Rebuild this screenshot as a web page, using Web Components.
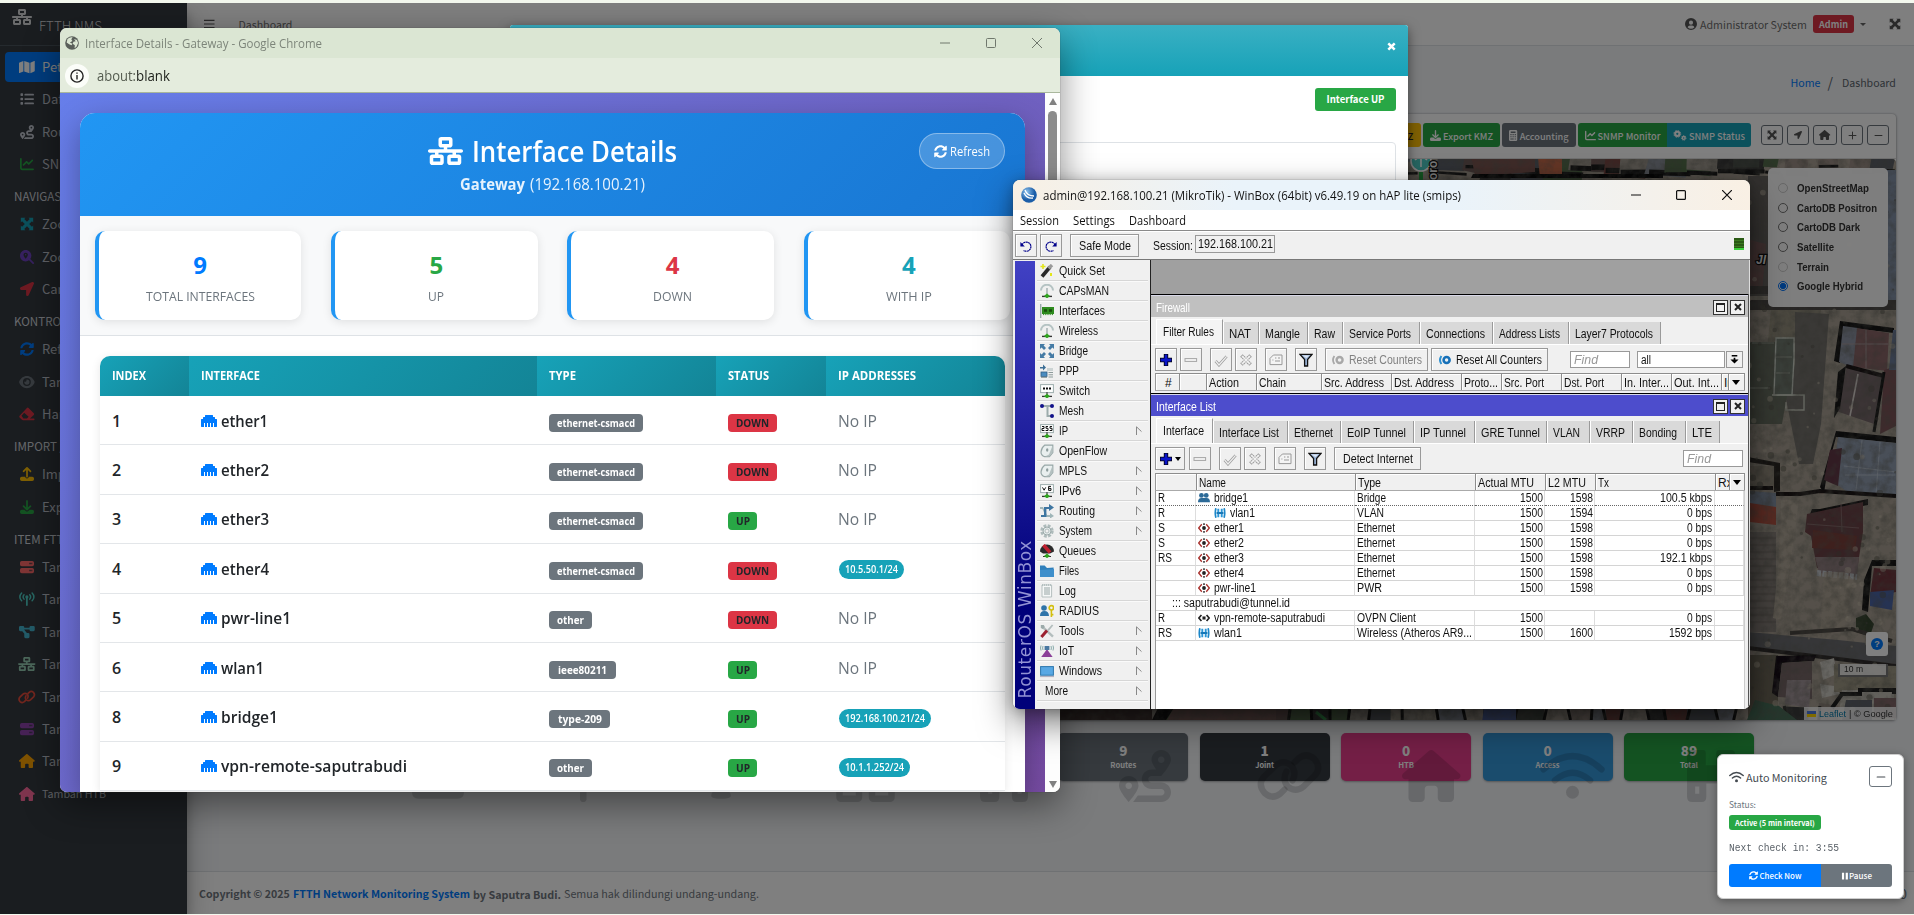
<!DOCTYPE html>
<html lang="id">
<head>
<meta charset="utf-8">
<title>FTTH NMS</title>
<style>
html,body{margin:0;padding:0;width:1914px;height:915px;overflow:hidden;background:#f3f8ee}
</style>
</head>
<body>
<desk-top></desk-top>
<script>
const SS='"Noto Sans CJK SC","Open Sans",sans-serif';
const SEG='"Open Sans","Noto Sans",sans-serif';
const define=(tag,css,render)=>customElements.define(tag,class extends HTMLElement{
  connectedCallback(){
    if(this.shadowRoot)return;
    this.attachShadow({mode:'open'}).innerHTML='<style>*{box-sizing:border-box}'+css+'</style>'+render(this);
  }
});

/* text run set to a fixed advance width */
customElements.define('fit-text',class extends HTMLElement{
  connectedCallback(){
    if(this.shadowRoot)return;
    this.attachShadow({mode:'open'}).innerHTML='<style>:host{display:inline-block;white-space:nowrap;flex:none;text-align:left}span{display:inline-block;transform-origin:0 50%}</style><span><slot></slot></span>';
    const w=+this.getAttribute('w'),s=this.shadowRoot.querySelector('span');
    if(!w||!this.textContent.length)return;
    const nat=s.getBoundingClientRect().width;
    if(!nat)return;
    const cs=getComputedStyle(this);
    if(cs.fontFamily.includes('CJK'))s.style.fontSize=(parseFloat(cs.fontSize)*w/nat).toFixed(3)+'px';
    else s.style.transform=`scaleX(${(w/nat).toFixed(4)})`;
    this.style.width=w+'px';
  }
});
const T=(t,w)=>`<fit-text w="${w}">${t}</fit-text>`;

/* ---------- icons ---------- */
const I={
net:[640,512,'<path d="M256 64H384v64H256V64zM240 0c-26.5 0-48 21.5-48 48v96c0 26.5 21.5 48 48 48h48v32H32c-17.7 0-32 14.3-32 32s14.3 32 32 32h96v32H80c-26.5 0-48 21.5-48 48v96c0 26.5 21.5 48 48 48H240c26.5 0 48-21.5 48-48V368c0-26.5-21.5-48-48-48H192V288H448v32H400c-26.5 0-48 21.5-48 48v96c0 26.5 21.5 48 48 48H560c26.5 0 48-21.5 48-48V368c0-26.5-21.5-48-48-48H512V288h96c17.7 0 32-14.3 32-32s-14.3-32-32-32H352V192h48c26.5 0 48-21.5 48-48V48c0-26.5-21.5-48-48-48H240zM96 448V384H224v64H96zm320-64H544v64H416V384z"/>'],
sync:[512,512,'<path d="M370.72 133.28C339.458 104.008 298.888 87.962 255.848 88c-77.458.068-144.328 53.178-162.791 126.85-1.344 5.363-6.122 9.15-11.651 9.15H24.103c-7.498 0-13.194-6.807-11.807-14.176C33.933 94.924 134.813 8 256 8c66.448 0 126.791 26.136 171.315 68.685L463.03 40.97C478.149 25.851 504 36.559 504 57.941V192c0 13.255-10.745 24-24 24H345.941c-21.382 0-32.09-25.851-16.971-40.971l41.75-41.749zM32 296h134.059c21.382 0 32.09 25.851 16.971 40.971l-41.75 41.75c31.262 29.273 71.835 45.319 114.876 45.28 77.418-.07 144.315-53.144 162.787-126.849 1.344-5.363 6.122-9.15 11.651-9.15h57.304c7.498 0 13.194 6.807 11.807 14.176C478.067 417.076 377.187 504 256 504c-66.448 0-126.791-26.136-171.315-68.685L48.97 471.03C33.851 486.149 8 475.441 8 454.059V320c0-13.255 10.745-24 24-24z"/>'],
home:[576,512,'<path d="M575.8 255.5c0 18-15 32.1-32 32.1h-32l.7 160.2c0 2.7-.2 5.4-.5 8.1V472c0 22.1-17.9 40-40 40H392c-22.1 0-40-17.9-40-40V384c0-17.7-14.3-32-32-32H256c-17.7 0-32 14.3-32 32v88c0 22.1-17.9 40-40 40H104c-22.1 0-40-17.9-40-40V287.6H32c-18 0-32-14-32-32.1c0-9 3-17 10-24L266.4 8c7-7 15-8 22-8s15 2 21 7L564.8 231.5c8 7 12 15 11 24z"/>'],
map:[576,512,'<path d="M0 117.66v346.32c0 11.32 11.43 19.06 21.94 14.86L160 416V32L20.12 87.95A32.006 32.006 0 0 0 0 117.66zM192 416l192 64V96L192 32v384zM554.06 33.16L416 96v384l139.88-55.95A31.996 31.996 0 0 0 576 394.34V48.02c0-11.32-11.43-19.06-21.94-14.86z"/>'],
list:[512,512,'<path d="M40 48h48q24 0 24 24v48q0 24-24 24H40q-24 0-24-24V72q0-24 24-24zM192 64H480q32 0 32 32t-32 32H192q-32 0-32-32t32-32zm0 160H480q32 0 32 32t-32 32H192q-32 0-32-32t32-32zm0 160H480q32 0 32 32t-32 32H192q-32 0-32-32t32-32zM40 208h48q24 0 24 24v48q0 24-24 24H40q-24 0-24-24v-48q0-24 24-24zm0 160h48q24 0 24 24v48q0 24-24 24H40q-24 0-24-24v-48q0-24 24-24z"/>'],
route:[512,512,'<path d="M416 320h-96c-17.6 0-32-14.4-32-32s14.4-32 32-32h96s96-107 96-160-43-96-96-96-96 43-96 96c0 25.5 22.2 63.4 45.3 96H320c-52.9 0-96 43.1-96 96s43.1 96 96 96h96c17.6 0 32 14.4 32 32s-14.4 32-32 32H185.5c-16 24.8-33.8 47.7-47.3 64H416c52.9 0 96-43.1 96-96s-43.1-96-96-96zm0-256c17.7 0 32 14.3 32 32s-14.3 32-32 32-32-14.3-32-32 14.3-32 32-32zM96 256c-53 0-96 43-96 96s96 160 96 160 96-107 96-160-43-96-96-96zm0 128c-17.7 0-32-14.3-32-32s14.3-32 32-32 32 14.3 32 32-14.3 32-32 32z"/>'],
chart:[512,512,'<path d="M64 64c0-17.7-14.3-32-32-32S0 46.3 0 64V400c0 44.2 35.8 80 80 80H480c17.7 0 32-14.3 32-32s-14.3-32-32-32H80c-8.8 0-16-7.2-16-16V64zm406.6 86.6c12.5-12.5 12.5-32.8 0-45.3s-32.8-12.5-45.3 0L320 210.7l-57.4-57.4c-12.5-12.5-32.8-12.5-45.3 0l-112 112c-12.5 12.5-12.5 32.8 0 45.3s32.8 12.5 45.3 0L240 221.3l57.4 57.4c12.5 12.5 32.8 12.5 45.3 0l128-128z"/>'],
expand:[512,512,'<path d="M30 30H200L155 75 256 176 357 75 312 30H482V200L437 155 336 256 437 357 482 312V482H312L357 437 256 336 155 437 200 482H30V312L75 357 176 256 75 155 30 200z"/>'],
search:[512,512,'<path fill-rule="evenodd" d="M416 208c0 46-15 88-40 122L503 457q20 22 0 45t-45 0L330 376c-34 25-76 40-122 40C93 416 0 323 0 208S93 0 208 0s208 93 208 208zM208 96c-44 0-80 32-80 76 0 50 80 148 80 148s80-98 80-148c0-44-36-76-80-76zm0 50a28 28 0 1 1 0 56 28 28 0 0 1 0-56z"/>'],
arrow:[512,512,'<path d="M444.52 3.52L28.74 195.42c-47.97 22.39-31.98 92.75 19.19 92.75h175.91v175.91c0 51.17 70.36 67.17 92.75 19.19l191.9-415.78c15.99-38.39-25.59-79.97-63.97-63.97z"/>'],
eye:[576,512,'<path fill-rule="evenodd" d="M288 32C160 32 50 120 8 240q-6 16 0 32C50 392 160 480 288 480s238-88 280-208q6-16 0-32C526 120 416 32 288 32zm0 80a144 144 0 1 1 0 288 144 144 0 0 1 0-288zm0 48a96 96 0 0 1 0 192 96 96 0 0 1-94-116q20 14 44 10t32-24 0-44q8-18 18-18z"/>'],
eraser:[576,512,'<path fill-rule="evenodd" d="M290 32q32-22 60 4L540 226q26 32 0 62L400 416H544q26 6 26 32t-26 32H144q-20 0-36-14L22 380q-24-30 0-60zM190 210L92 316l70 100h130l60-60z"/>'],
upload:[512,512,'<path d="M288 109V352q-6 32-32 32t-32-32V109l-73 74q-24 14-45-6-14-22 0-40L233 9q24-18 46 0L407 137q16 26-2 44-22 14-44 0zM64 352H192q0 64 64 64t64-64H448q64 0 64 64v32q0 64-64 64H64Q0 512 0 448V416q0-64 64-64z"/>'],
download:[512,512,'<path d="M288 32V275l73-74q24-14 45 6 14 22 0 40L279 375q-24 18-46 0L105 247q-16-26 2-44 22-14 44 0l73 72V32q6-32 32-32t32 32zM64 352H164l46 46q46 38 92 0l46-46H448q64 0 64 64v32q0 64-64 64H64Q0 512 0 448V416q0-64 64-64z"/>'],
server:[512,512,'<path fill-rule="evenodd" d="M64 32H448q64 0 64 64v64q0 64-64 64H64Q0 224 0 160V96Q0 32 64 32zM344 104v48h48v-48zm72 0v48h32v-48zM64 288H448q64 0 64 64v64q0 64-64 64H64Q0 480 0 416V352q0-64 64-64zm280 72v48h48v-48zm72 0v48h32v-48z"/>'],
tower:[576,512,'<g fill="none" stroke="currentColor" stroke-width="54" stroke-linecap="round"><path d="M96 40Q-34 180 96 320M184 100Q116 180 184 260M480 40Q610 180 480 320M392 100Q460 180 392 260"/></g><circle cx="288" cy="180" r="58"/><path d="M256 180h64V484q-6 28-32 28t-32-28z"/>'],
diagram:[576,512,'<path d="M48 32h96q48 0 48 48v16H384V80q0-48 48-48h96q48 0 48 48v96q0 48-48 48H432q-48 0-48-48V160H192v12l96 116h48q48 0 48 48v96q0 48-48 48H240q-48 0-48-48V336q0-12 4-20L120 224H48Q0 224 0 176V80Q0 32 48 32z"/>'],
link:[640,512,'<g fill="none" stroke="currentColor" stroke-width="62" stroke-linecap="round"><path d="M270 390L232 428Q150 492 76 424 2 340 70 262L184 150Q260 90 336 150 394 220 350 300"/><path d="M370 122L408 84Q490 20 564 88 638 172 570 250L456 362Q380 422 304 362 246 292 290 212"/></g>'],
eth:[512,512,'<path d="M496 192h-48v-48c0-8.8-7.2-16-16-16h-48V80c0-8.8-7.2-16-16-16H144c-8.8 0-16 7.2-16 16v48H80c-8.8 0-16 7.2-16 16v48H16c-8.8 0-16 7.2-16 16v224c0 8.8 7.2 16 16 16h80V320h32v128h64V320h32v128h64V320h32v128h64V320h32v128h80c8.8 0 16-7.2 16-16V208c0-8.8-7.2-16-16-16z"/>'],
user:[512,512,'<path fill-rule="evenodd" d="M256 0a256 256 0 1 1 0 512 256 256 0 0 1 0-512zm0 110a88 88 0 1 0 0 176 88 88 0 0 0 0-176zM110 390q60 70 146 70t146-70q-26-66-100-66h-92q-74 0-100 66z"/>'],
calc:[384,512,'<path fill-rule="evenodd" d="M64 0H320q64 0 64 64V448q0 64-64 64H64Q0 512 0 448V64Q0 0 64 0zM80 64v72H304V64zM64 190v50h56v-50zm100 0v50h56v-50zm100 0v50h56v-50zM64 290v50h56v-50zm100 0v50h56v-50zm100 0v50h56v-50zM64 390v50h156v-50zm200 0v50h56v-50z"/>'],
cogs:[640,512,'<g fill="none" stroke="currentColor"><circle cx="200" cy="180" r="100" stroke-width="96"/><circle cx="200" cy="180" r="160" stroke-width="40" stroke-dasharray="76 49.6"/><circle cx="500" cy="370" r="66" stroke-width="66"/><circle cx="500" cy="370" r="108" stroke-width="36" stroke-dasharray="52 33"/></g>'],
wifi:[640,512,'<g fill="none" stroke="currentColor" stroke-width="62" stroke-linecap="round"><path d="M34 190Q320-70 606 190M146 300Q320 150 494 300"/></g><circle cx="320" cy="416" r="64"/>'],
building:[512,512,'<path fill-rule="evenodd" d="M60 0H180q24 0 24 24V150H308V24q0-24 24-24H452q40 0 40 40V460q0 52-50 52H380q-46 0-46-52V330H210V460q0 52-46 52H70q-50 0-50-52V40Q20 0 60 0zM100 360v70h40v-70zM390 360v70h40v-70z"/>'],
splitter:[512,512,'<path d="M60 0h392v200L320 330v70q40 20 30 60-20 20-94 20t-94-20q-10-40 30-60v-70L60 200z"/>'],
plus:[512,512,'<path d="M256 60V452M60 256H452" stroke="currentColor" stroke-width="56" stroke-linecap="round"/>'],
minus:[512,512,'<path d="M60 256H452" stroke="currentColor" stroke-width="60" stroke-linecap="round"/>'],
pause:[512,512,'<path d="M60 40H200V472H60zM300 40H440V472H300z"/>'],
bars:[448,512,'<path d="M0 72H448V124H0zM0 230H448V282H0zM0 388H448V440H0z"/>'],
globe:[512,512,'<circle cx="256" cy="256" r="250"/><path fill="#dbe6d3" d="M90 110q90-80 190-60l-50 70 40 60-90 60 90 40-30 60-90-40-90-60zM330 110l110 40 40 110-60 130-70 60 10-110-80-60 30-70 80-20z"/>']
};
define('fa-icon',':host{display:inline-block;flex:none;line-height:0}svg{display:block;fill:currentColor}',h=>{
  const [w,t,p]=I[h.getAttribute('n')],s=+h.getAttribute('s');
  return `<svg width="${(s*w/t).toFixed(2)}" height="${s}" viewBox="0 0 ${w} ${t}">${p}</svg>`;
});
const IC=(n,s,c)=>`<fa-icon n="${n}" s="${s}"${c?` style="color:${c}"`:''}></fa-icon>`;

/* 14px pictograms of the router tool */
const dome='<path d="M1 6.5A6 5.8 0 0 1 13 6.5" fill="none" stroke="#b5c3c3" stroke-width="2"/><path d="M7 4v6" stroke="#a9b5b5" stroke-width="1.6"/><path d="M2 12.4h10" stroke="#333" stroke-width="1.4"/><path d="M7 9.5l3 2.6L7 14.4 4 12z" fill="#2fa51e"/>';
const box=(t)=>`<rect x=".6" y=".6" width="12.8" height="8" fill="#fff" stroke="#9dadad"/>${t}<path d="M7 8v3" stroke="#555" stroke-width="1.4"/><path d="M2 12.4h10" stroke="#333" stroke-width="1.3"/><path d="M7 9.8l3 2.4-3 2.2-3-2.2z" fill="#2fa51e"/>`;
const disc='<path d="M4.6 1.2h8.2v7.4L9.4 12.7H4.6Q1 11.6 1 8 1.4 3.5 4.6 1.2z" fill="#e9efef" stroke="#97a7a7" stroke-width="1.2"/><path d="M12.6 1.4v7L9.4 12.5H5L9 10.6z" fill="#b4c0c0"/><ellipse cx="7.2" cy="6" rx="1.2" ry="1.7" fill="#8c9c9c"/>';
const W={
wand:'<path d="M2 12.5L10 3" stroke="#2b2b2b" stroke-width="3.6"/><path d="M8.6 4.4L12 1" stroke="#9a9a9a" stroke-width="3.4"/><path d="M3 0v5M.5 2.5h5" stroke="#e3e61a" stroke-width="1.6"/><path d="M11 9v3" stroke="#e3e61a" stroke-width="2"/>',
dome,
card:'<path d="M.7 0v14" stroke="#9aa" stroke-width="1.4"/><rect x="2" y="3" width="12" height="7" fill="#2e8b1e"/><path d="M4 5.2h3v2.6H4zM9 5.2h3v2.6H9z" fill="#174d0c"/><path d="M3 10.6h10" stroke="#2e8b1e" stroke-dasharray="1.2 1"/>',
bridge:'<g fill="#457ba5"><path d="M0 0h5L3.6 1.6 6 4 4 6 1.6 3.6 0 5zM14 0H9l1.4 1.6L8 4l2 2 2.4-2.4L14 5zM0 14h5l-1.4-1.6L6 10 4 8l-2.4 2.4L0 9zM14 14H9l1.4-1.6L8 10l2-2 2.4 2.4L14 9z"/></g>',
ppp:'<path d="M0 3h3V.5L6 3.6 3 6.5V4.4H0z" fill="#3d6f96"/><rect x="7" y="4" width="6" height="3" fill="#ccd4d4"/><rect x="1" y="8" width="6" height="4.4" fill="#4b8cc0" stroke="#315f85" stroke-width=".8"/><path d="M8.5 8.5H13M8.5 10.8H13M8.5 13H13M1 13.4h6" stroke="#8d9b9b"/>',
sw:box('<path d="M3 4.4h8" stroke="#111" stroke-width="2" stroke-dasharray="2 1"/>'),
mesh:'<path d="M2 2h10M7.5 2v10H12" fill="none" stroke="#9cabab" stroke-width="2"/><g fill="#12128a"><circle cx="2" cy="2" r="2"/><circle cx="12" cy="2" r="2"/><circle cx="12" cy="12" r="2"/></g>',
ip:box('<path d="M2 2.5h2v2H2v2h2.4M8 2.5H6v1.8h2v2.2H5.6M12 2.5h-2v1.8h2v2.2H9.6" fill="none" stroke="#111"/>'),
disc,
v6:box('<path d="M2.5 3.4l1.6 2.8 1.6-2.8M11 2.4H8.6v4H11v-2H8.6" fill="none" stroke="#111"/>'),
route:'<path d="M0 3h3l4 8h3V9l4 3-4 2.5V13H6L2.4 5H0z" fill="#9fb5b8"/><path d="M1 13V11h3V3h5V0l5 3.6L9 7V5H6.4v8z" fill="#3f76a1"/>',
gear:'<circle cx="7" cy="7" r="5.2" fill="none" stroke="#aebbbb" stroke-width="3" stroke-dasharray="2.7 1.4"/><circle cx="7" cy="7" r="4" fill="#e6ecec" stroke="#9caaaa"/><circle cx="7" cy="7" r="2" fill="#f0f0f0" stroke="#9caaaa" stroke-width=".7"/>',
queue:'<path d="M0 7.5A7 7 0 0 1 14 7.5L10 9.5H3z" fill="#2b2b2b"/><path d="M3.5 1L10 8.4" stroke="#c02030" stroke-width="3.6"/><path d="M3 12.5h8" stroke="#333" stroke-width="1.2"/><path d="M7 9.6l3 2.4-3 2.2-3-2.2z" fill="#2fa51e"/>',
files:'<path d="M0 1.5h4.6L7 4l6.6-.4V13H0z" fill="#2f7fbb"/><path d="M0 6l14-1v8H0z" fill="#3f8fcb"/>',
log:'<path d="M2 1h9.6v12H2z" fill="#f6f8f8" stroke="#b5bfbf"/><path d="M4 4h6M4 6h6M4 8h6M4 10h6" stroke="#96a4a4"/><path d="M2 1h10" stroke="#9aa" stroke-dasharray="1 1"/>',
radius:'<circle cx="4" cy="4" r="2.8" fill="#2f74a9"/><path d="M0 12q0-5 4.4-5T9 12z" fill="#2f74a9"/><circle cx="11.4" cy="3.8" r="2.2" fill="none" stroke="#d3bf10" stroke-width="1.7"/><path d="M11.4 6v7M11.4 10.6h2" stroke="#d3bf10" stroke-width="1.6"/>',
tools:'<path d="M2 2.4L13 12.6" stroke="#b3bdbd" stroke-width="2.4"/><path d="M.8 1v3l2 1 2-2-1-2z" fill="#9caaaa"/><path d="M12.6 1L8 6.4" stroke="#b3bdbd" stroke-width="1.8"/><path d="M7 6.6L1.4 13" stroke="#9c2130" stroke-width="3"/>',
iot:'<path d="M1 1.5Q0 4 1 6.5M13 1.5Q14 4 13 6.5M3 2Q2.2 4 3 6M11 2Q11.8 4 11 6" fill="none" stroke="#8aa" /><rect x="4.6" y="2" width="4.8" height="4" fill="#4a78a0"/><path d="M6.4 6h1.2l5 7H1.2z" fill="#8b3f98"/>',
win:'<rect x=".6" y="2.6" width="12.8" height="8.6" fill="#58a8e4" stroke="#2c77ae"/><path d="M0 12.6h14" stroke="#aab" stroke-width="1"/>',
br:'<g fill="#2c6a97"><circle cx="4" cy="4" r="2.8"/><circle cx="9.6" cy="4" r="2.8"/><path d="M0 12q0-5 4-5h6q4 0 4 5z"/></g>',
wl:'<g fill="none" stroke="#1b86c8"><path d="M2.2 1.5Q.8 7 2.2 12.5M11.8 1.5Q13.2 7 11.8 12.5" stroke-width="2"/><path d="M5 2v10M9 2v10" stroke="#2a95d6" stroke-width="2.2"/><path d="M3 7h8" stroke="#1778b8" stroke-width="2.4"/></g>',
port:'<path d="M4.4 2.6L.8 7l3.6 4.4M9.6 2.6L13.2 7 9.6 11.4" fill="none" stroke="#a8302c" stroke-width="1.5"/><circle cx="7" cy="7" r="2.2" fill="#222"/><path d="M7 1.4v2M7 10.6v2" stroke="#444" stroke-width="2"/>',
vpn:'<path d="M4 3.4L1 7l3 3.6M10 3.4L13 7l-3 3.6" fill="none" stroke="#222" stroke-width="1.9"/><rect x="5.2" y="5.2" width="3.6" height="3.6" fill="#222"/>',
add:'<path d="M7 1v12M1 7h12" stroke="#000" stroke-width="4.4"/><path d="M7 1.6v10.8M1.6 7h10.8" stroke="#0a14c8" stroke-width="2.8"/>',
rem:'<rect x="1" y="5.6" width="11.6" height="2.8" fill="#f6f6f6" stroke="#a5a5a5"/>',
ok:'<path d="M1.6 8l3.4 4L12.6 3.4" fill="none" stroke="#9e9e9e" stroke-width="2.8"/><path d="M1.6 8l3.4 4L12.6 3.4" fill="none" stroke="#f0f0f0" stroke-width="1.2"/>',
no:'<path d="M2.4 2.4l9.2 9.2M11.6 2.4l-9.2 9.2" stroke="#9e9e9e" stroke-width="3.6" stroke-dasharray="1.8 .5"/><path d="M3 3l8 8M11 3l-8 8" stroke="#f2f2f2" stroke-width="1.6"/>',
note:'<path d="M1 5.4L4.4 2H13v9.6H1z" fill="#f4f4f4" stroke="#999"/><path d="M3.4 7h1M6 5h1.4M9 5h2M6 8h5" stroke="#999"/>',
filter:'<path d="M1 1.4h12L8.6 6.6V13H5.6V6.6z" fill="#9ab4d8" stroke="#111" stroke-width="1.3"/><path d="M3.4 2.4h7L7.4 5z" fill="#dfe8f4"/>',
undo:'<path d="M3 6a4.6 4.6 0 1 1 1.6 5.4" fill="none" stroke="#00008b" stroke-width="1.2" stroke-dasharray="2 .4"/><path d="M1.4 3v4.4h4.4z" fill="#00008b"/>',
redo:'<path d="M11 6a4.6 4.6 0 1 0-1.6 5.4" fill="none" stroke="#00008b" stroke-width="1.2" stroke-dasharray="2 .4"/><path d="M12.6 3v4.4H8.2z" fill="#00008b"/>',
rst:'<path d="M3.4 3Q.6 7 3.4 11" fill="none" stroke="#2d8fd0" stroke-width="2"/><circle cx="8.6" cy="7" r="3" fill="none" stroke="#1670b8" stroke-width="2.6"/>',
rstd:'<path d="M3.4 3Q.6 7 3.4 11" fill="none" stroke="#a8a8a8" stroke-width="1.8"/><circle cx="8.6" cy="7" r="3" fill="none" stroke="#a8a8a8" stroke-width="2.4"/>',
dd:'<path d="M4 3h6M7 5v3" stroke="#000" stroke-width="1.8"/><path d="M2.6 7h8.8L7 11.4z" fill="#000"/>'
};
define('win-icon',':host{display:inline-block;flex:none;line-height:0}svg{display:block}',h=>`<svg width="${h.getAttribute('s')||14}" height="${h.getAttribute('s')||14}" viewBox="0 0 14 14">${W[h.getAttribute('n')]}</svg>`);
const WI=(n,s)=>`<win-icon n="${n}" s="${s||14}"></win-icon>`;

/* ---------- sidebar ---------- */
define('side-bar',`:host{display:block;width:187px;height:911px;background:#343a40;font-family:${SS};color:#c2c7d0;flex:none;box-shadow:0 14px 28px rgba(0,0,0,.25),0 10px 10px rgba(0,0,0,.22);z-index:2;position:relative}
.brand{height:43px;border-bottom:1px solid #4b545c;display:flex;padding:6px 0 0 12px;gap:7px;font-size:18px;line-height:28px;color:#d4d6d8;font-weight:300}
nav{padding:6px 5px}
.i{height:30px;margin-bottom:2.35px;border-radius:4px;display:grid;grid-template-columns:44px 1fr;align-items:center;font-size:13px;line-height:20px;padding-right:5px;white-space:nowrap;overflow:hidden}
.i fa-icon{justify-self:center}.i b{font-weight:400;margin-left:-7px}
.on{background:#007bff;color:#fff}
.h{height:28px;padding:6px 0 0 9px;font-size:11.6px;line-height:18px;color:#d0d4db;font-weight:400;white-space:nowrap;overflow:hidden}`,()=>{
const it=(n,c,t,x='')=>`<div class="i ${x}">${IC(n,14,c)}<b>${t}</b></div>`,hd=t=>`<div class="h">${t}</div>`;
return `<div class="brand">${IC('net',16)}${T('FTTH NMS',63)}</div><nav>`+
it('map','#fff','Peta','on')+it('list','#c2c7d0','Daftar')+it('route','#c2c7d0','Routes')+it('chart','#28a745','SNMP')+
hd('NAVIGASI')+it('expand','#17a2b8','Zoom')+it('search','#6f42c1','Zoom')+it('arrow','#dc3545','Cari')+
hd('KONTROL')+it('sync','#007bff','Refresh')+it('eye','#6c757d','Tampil')+it('eraser','#dc3545','Hapus')+
hd('IMPORT / EXPORT')+it('upload','#ffc107','Import')+it('download','#28a745','Export')+
hd('ITEM FTTH')+it('server','#ff6b6b','Tambah')+it('tower','#4ecdc4','Tambah')+it('diagram','#45b7d1','Tambah')+it('net','#96ceb4','Tambah')+it('link','#e74c3c','Tambah')+it('server','#8e44ad','Tambah')+it('home','#ffa500','Tambah')+it('home','#ff6b9d',T('Tambah HTB',64))+'</nav>';
});

/* ---------- satellite map ---------- */
define('sat-map',':host{display:block;position:relative;height:561px;overflow:hidden;border-radius:4px 4px 0 0}svg{display:block}.o{position:absolute}',()=>{
let s=7;const r=()=>(s=(s*16807)%2147483647)/2147483647;
let p='';
const cols=['#6f5a58','#8a8f98','#a19a90','#4a5048','#b0a79b','#7a4a44','#5b6068','#3a3a3a','#9c8f86','#56704e'];
for(let x=1055;x<1900;x+=14+r()*22){const w=14+r()*34,c=cols[r()*10|0];p+=`<path d="M${x} ${150+r()*8}l${w} ${r()*5}l${-r()*6} ${12+r()*14}l${-w} ${-r()*4}z" fill="${c}"/><path d="M${x} ${166+r()*8}l${w} ${r()*3-1}" stroke="#1c1c1c" stroke-width="${2+r()*4}"/>`;
p+=`<path d="M${x} ${703+r()*5}l${w} ${r()*4}v20h${-w}z" fill="${cols[r()*10|0]}"/><path d="M${x} 720l${r()*8-4} -14" stroke="#151515" stroke-width="3"/>`;}
let d='';for(let i=0;i<150;i++){const x=1748+r()*148,y=180+r()*540;d+=`<circle cx="${x}" cy="${y}" r="${1+r()*2.4}" fill="${r()<.5?'#57564c':'#c9bfae'}" opacity=".5"/>`;}
let hatch='';for(let i=0;i<13;i++)hatch+=`<path d="M1750 ${538+i*7}h26" stroke="#77706a" stroke-width="2.4" opacity=".6"/>`;
return `<svg width="1690" height="561" viewBox="206 159 1690 561"><defs><filter id="n" x="0" y="0" width="100%" height="100%"><feTurbulence type="fractalNoise" baseFrequency=".11" numOctaves="4" seed="4"/><feColorMatrix values="0 0 0 0 .12  0 0 0 0 .12  0 0 0 0 .1  1.7 0 0 0 -.62"/></filter><filter id="b"><feGaussianBlur stdDeviation=".7"/></filter></defs>
<rect x="206" y="159" width="1690" height="561" fill="#aaa194"/><g filter="url(#b)">${p}
<path d="M1470 150h65v22l-60 4z" fill="#7c5751"/><path d="M1538 158l24-2v18l-22 4z" fill="#c56a4c"/><path d="M1473 174h190v4h-192z" fill="#111"/>
<path d="M1748 176h22v120h-22z" fill="#66625f"/><path d="M1750 240l16 4-4 50-12-2z" fill="#7b5c5c"/><path d="M1886 170h10v135h-8z" fill="#8492a8"/><path d="M1748 286h24v8h-24zM1748 300h148v10h-148z" fill="#4d4a46"/>
<path d="M1771 310h50l-8 70-20 10h-30z" fill="#96907f"/><path d="M1795 312l34 2-8 110-8 40h-14l-14-70 10-30z" fill="#74726d"/>
<path d="M1750 342h38v48l-6 34h-32z" fill="#697062"/><path d="M1776 338h18v20l-2 37h-18z" fill="#737d72" stroke="#ccd2c8" stroke-width="1.4"/><path d="M1772 395h32v15h-18v-8" fill="none" stroke="#c9cdc0" stroke-width="1.4"/><path d="M1752 343h22M1776 357h16M1776 373h14M1750 388h20" stroke="#aab0a2"/>
<path d="M1840 321l54 7v5l-50-6-4 36-6-2z" fill="#131313"/><path d="M1843 326l15 2-4 40-15-6z" fill="#8e95a5"/><path d="M1857 328l32 5-2 38-34-4z" fill="#8b6668"/><path d="M1842 344h46M1866 330v38" stroke="#a8999a"/>
<path d="M1847 366l36 9-6 50-41-14z" fill="#76686a"/><path d="M1838 372l8-6-6 42-6 10z" fill="#141414"/><path d="M1858 374l-8 42" stroke="#d9d3ce" stroke-width="1.6"/><path d="M1846 366l38 10" stroke="#1c1518" stroke-width="4"/>
<path d="M1884 370l12-4v60l-16 8z" fill="#7c5558"/><path d="M1884 372l-10 60" stroke="#141414" stroke-width="3"/><path d="M1893 330h4v40h-8z" fill="#6d7c9a"/>
<path d="M1836 431l60 6v6l-60-6-8 30-4 26-4-6z" fill="#151515"/><path d="M1838 437l58 6v52l-50-4-14-10z" fill="#929eb1"/><path d="M1830 450l12-2-4 38-14-6z" fill="#643846"/><path d="M1844 466l52 6M1862 440l-6 50M1880 442l-4 52M1845 475h50" stroke="#b3bdca"/>
<path d="M1748 457l32 6v28l-6 1v-26l-26-4z" fill="#2b2723"/><path d="M1748 466h26v24h-26z" fill="#999081"/><path d="M1750 491l26 2v14l-26-3z" fill="#8794a8"/><path d="M1750 503l26 4v18l-26-3z" fill="#b25544"/><path d="M1748 488h25M1776 494h24l20-3 76 5" stroke="#1a1716" stroke-width="4" fill="none"/>
<path d="M1750 532h26v100h-26z" fill="#8a837d"/>${hatch}<path d="M1781 500h18l-8 60-10 60-8-2 6-60z" fill="#b3a99a"/>
<path d="M1812 509h8l48-10v6l-44 8-2 10-14-4z" fill="#151213"/><path d="M1807 514l56-12v30l-6 38-40-2-6-32-6-4z" fill="#6c4346"/><path d="M1841 504l1 28M1807 524l52 4" stroke="#8a6c6e"/><path d="M1813 530l44 6-2 14-43-2z" fill="#7c403b"/><path d="M1815 557h44l-2 20-38-4z" fill="#938082"/><path d="M1817 573l40 4" stroke="#c3c7cc" stroke-width="6" stroke-dasharray="4 1.5"/>
<path d="M1872 566h24v-6h-24l-8 20-2 30 6 2z" fill="#151515"/><path d="M1874 568l22 2v22l-26 4z" fill="#71343c"/><path d="M1870 592l24-2-2 20-22-4z" fill="#4e66a6"/><path d="M1824 572h20l10 8-10 50-24 6z" fill="#b2a796" opacity=".6"/>
<path d="M1856 618l10-4 8 10-4 12-14-4z" fill="#34452f"/><path d="M1748 632l90 8 58 6v18l-60-6-88-10z" fill="#6c6d71"/><path d="M1790 633l62-4 40 12" fill="none" stroke="#494440" stroke-width="4"/><path d="M1748 648l148 18" stroke="#2f2c2b" stroke-width="4"/>
<path d="M1748 655h30v65h-30z" fill="#716a5a"/><path d="M1776 656l40-1-2 6-32 2-4 34-6-4z" fill="#141112"/><path d="M1782 663l30-2v38l-34-2z" fill="#786767"/><path d="M1787 680h24l-2 28-24-4z" fill="#a3969a"/>
<path d="M1820 662l14-4 3 16-14 6zM1820 684l14 2 6 8-18 4z" fill="#cfccc4"/><path d="M1834 664l62 2v26h-62z" fill="#a19b87"/><path d="M1842 690h52v30h-56z" fill="#c4c0b6"/><path d="M1840 694h20v-4h34v4M1832 708l10-14" stroke="#1a1a1a" stroke-width="4" fill="none"/><path d="M1846 700h26v20h-30z" fill="#5e626c"/><path d="M1874 698h22v20h-22z" fill="#84686a"/><path d="M1755 700l24 6 18 14h-50z" fill="#48705a"/>
<path d="M1484 708h32v14h-34z" fill="#5568a5"/><path d="M1158 708h16l-8 12h-14z" fill="#181212"/><path d="M1060 700h92v22h-92z" fill="#4a3a38"/><path d="M1176 704h100v18h-110z" fill="#81625f"/><path d="M1316 712l10 8" stroke="#36a050" stroke-width="3"/>
${d}</g><rect x="206" y="159" width="1690" height="561" filter="url(#n)" opacity=".6"/>
<path d="M1421 172v20" stroke="#28a745" stroke-width="4"/><circle cx="1421" cy="161" r="10" fill="#4ecdc4" stroke="#fff" stroke-width="1.6"/><path d="M1421 167v-9m-6 2q6-6 12 0" stroke="#fff" stroke-width="1.6" fill="none"/>
<g font-family="Liberation Sans" font-weight="700" font-size="12" fill="#eee" stroke="#111" stroke-width="2.4" paint-order="stroke"><text x="1756" y="264" font-style="italic">Jl</text><text transform="translate(1437 180) rotate(-90)">oro</text></g></svg>
<map-panel class="o" style="right:8px;top:9px"></map-panel><map-tools class="o" style="right:0;bottom:0"></map-tools>`;
});
define('map-panel',`:host{display:block;width:120px;height:139px;background:#fff;border-radius:5px;padding:10px 0 0 9.5px;font:700 11.5px "Liberation Sans",sans-serif;color:#333;opacity:.98}
div{height:19.7px;display:flex;align-items:center;gap:9px}i{width:10px;height:10px;border-radius:50%;border:1px solid #767676;flex:none}.g i{border-color:#d0d0d0}.on i{border-color:#0075ff;background:radial-gradient(circle,#0075ff 0 2.8px,#fff 3.4px)}`,()=>
[['OpenStreetMap',72,'g'],['CartoDB Positron',80,''],['CartoDB Dark',63,''],['Satellite',37,''],['Terrain',32,'g'],['Google Hybrid',66,'on']].map(a=>`<div class="${a[2]}"><i></i>${T(a[0],a[1])}</div>`).join(''));
define('map-tools',`:host{display:flex;flex-direction:column;align-items:flex-end;font:12px "Liberation Sans",sans-serif;color:#333}
.q{width:22px;height:24px;background:#fff;border-radius:3px;margin:0 8px 8px 0;display:flex;align-items:center;justify-content:center}.q b{width:12px;height:12px;border-radius:50%;background:#007bff;color:#fff;font-size:9px;line-height:12.5px;text-align:center}
.s{width:50px;height:13px;border:2px solid #777;border-top:0;background:rgba(255,255,255,.8);font-size:9.5px;line-height:10px;padding-left:4px;margin:0 8px 30px 0}
.a{height:13px;width:92px;background:rgba(255,255,255,.8);display:flex;align-items:center;gap:3px;padding-left:3px;font-size:9.5px;white-space:nowrap}.f{width:9px;height:6px;background:linear-gradient(#4C7BE1 50%,#FFD500 50%)}a{color:#0078a8}`,()=>
`<div class="q"><b>?</b></div><div class="s">${T('10 m',19)}</div><div class="a"><span class="f"></span><a>${T('Leaflet',27)}</a>${T('| © Google',44)}</div>`);

/* ---------- counters ---------- */
define('count-box',`:host{display:block;position:relative;width:130px;height:48px;border-radius:5px;background:var(--c);color:#fff;text-align:center;font:700 9px/12px ${SS};box-shadow:0 1px 2px rgba(0,0,0,.3);flex:none}
b{display:block;padding-top:9px;font-size:13.5px;line-height:17px}fa-icon{position:absolute;top:17px;left:61px;color:rgba(0,0,0,.15)}.w{left:57px}`,h=>{
const a=k=>h.getAttribute(k)||'';const ic=a('i');
return `${ic?`<fa-icon n="${ic}" s="52" class="${/wifi|link|net/.test(ic)?'w':''}"></fa-icon>`:''}<b>${a('v')}</b>${a('l')?T(a('l'),a('w')):''}`;});

/* ---------- dimmed dashboard ---------- */
define('dash-page',`:host{position:absolute;left:0;top:3px;width:1914px;height:911px;display:flex;font-family:${SS};background:#f4f6f9;overflow:hidden;isolation:isolate}
main{flex:1;display:flex;flex-direction:column;min-width:0}
.top{height:43px;background:#fff;border-bottom:1px solid #dee2e6;display:flex;align-items:center;padding:0 13px 0 17px;font-size:14px;line-height:20px;color:#6d6d6d;flex:none}
.top .ic{color:#555}.sp{flex:1}.bad{background:#dc3545;color:#fff;font-weight:700;font-size:11px;line-height:17px;height:18px;width:41px;border-radius:3px;text-align:center;margin-left:6px}
.car{border:3.5px solid transparent;border-top-color:#666;border-bottom:0;margin:0 23px 0 6px}
.bc{height:68px;display:flex;align-items:center;justify-content:flex-end;padding:4px 18px 0 0;gap:6px;font-size:14px;line-height:20px;color:#5c656d;flex:none}.bc a{color:#007bff}
.card{margin:0 18px 0 19px;height:606px;background:#fff;border-radius:4px;box-shadow:0 0 2px rgba(0,0,0,.3),0 1px 3px rgba(0,0,0,.3);flex:none;border:0}
.hd{height:45px;border-bottom:1px solid #ddd;display:flex;align-items:center;justify-content:flex-end;padding:0 7px 2px 0}
.bt{height:24px;border-radius:3px;display:flex;align-items:center;justify-content:center;gap:2px;color:#fff;font-size:11.5px;line-height:18px;font-weight:500;margin-right:2px;background:var(--b);width:var(--w)}
.ob{height:20px;width:var(--w);border:1px solid #6c757d;border-radius:3px;display:flex;align-items:center;justify-content:center;margin-left:4px;color:#555}
.cnt{display:flex;gap:11.4px;padding:13px 0 0 23px}
.sp2{flex:1}
footer{height:43px;background:#fff;border-top:1px solid #dee2e6;display:flex;align-items:center;padding:0 7px 0 12px;font-size:13.4px;line-height:20px;color:#70777e;flex:none;white-space:pre}
footer b{color:#70777e}footer b.l{color:#007bff}
.dim{position:absolute;inset:0;background:rgba(0,0,0,.5);z-index:3}`,()=>{
const bt=(b,w,ic,t,tw,x='')=>`<span class="bt" style="--b:${b};--w:${w}px;${x}">${IC(ic,11)}${T(t,tw)}</span>`;
const ob=(w,ic,s)=>`<span class="ob" style="--w:${w}px">${IC(ic,s)}</span>`;
const cb=(c,v='',l='',w='',i='')=>`<count-box style="--c:${c}" v="${v}" l="${l}" w="${w}" i="${i}"></count-box>`;
return `<side-bar></side-bar><main>
<div class="top"><span class="ic">${IC('bars',12)}</span><span style="width:24px"></span>${T('Dashboard',54)}<span class="sp"></span><span class="ic">${IC('user',12)}</span><span style="width:3px"></span>${T('Administrator System',107)}<span class="bad">${T('Admin',29)}</span><span class="car"></span><span class="ic">${IC('expand',12)}</span></div>
<div class="bc"><a>${T('Home',30)}</a><span style="padding:0 3px 0 1px">/</span>${T('Dashboard',54)}</div>
<div class="card"><div class="hd">${bt('#ffc107',80,'upload','Import KMZ',52,'color:#222')}${bt('#28a745',77,'download','Export KMZ',50)}${bt('#6c757d',74,'calc','Accounting',49)}${bt('#28a745',89,'chart','SNMP Monitor',63,'margin:0;border-radius:3px 0 0 3px')}${bt('#17a2b8',84,'cogs','SNMP Status',56,'border-radius:0 3px 3px 0;margin-right:6px')}${ob(22,'expand',10)}${ob(22,'arrow',8)}${ob(24,'home',10)}${ob(22,'plus',9)}${ob(22,'minus',9)}</div><sat-map></sat-map></div>
<div class="cnt">${cb('#f4f6f9')}${cb('#dc3545','','','','server')}${cb('#4ecdc4','','','','tower')}${cb('#45b7d1','','','','splitter')}${cb('#96ceb4','','','','net')}${cb('#ffa500','','','','building')}${cb('#6c757d','9','Routes',26,'route')}${cb('#343a40','1','Joint',19,'link')}${cb('#e83e8c','0','HTB',16,'home')}${cb('#3498db','0','Access',24,'wifi')}${cb('#28a745','89','Total',18,'building')}</div>
<span class="sp2"></span>
<footer><b>${T('Copyright © 2025',91)}</b><span style="width:3px"></span><b class="l">${T('FTTH Network Monitoring System',177)}</b><span style="width:3px"></span><b>${T('by Saputra Budi.',88)}</b><span style="width:3px"></span>${T('Semua hak dilindungi undang-undang.',195)}<span class="sp"></span>0</footer>
</main><div class="dim"></div>`;});

/* ---------- modal behind the windows ---------- */
define('info-modal',`:host{position:absolute;left:510px;top:25px;width:898px;height:600px;background:#fff;border-radius:3px;box-shadow:0 4px 12px rgba(0,0,0,.5);font-family:${SS};overflow:hidden}
header{height:51px;background:linear-gradient(#3ab0c3,#17a2b8);border-bottom:0;display:flex;align-items:center;justify-content:flex-end;padding:0 12px 8px 0}
.b{margin:12px 12px 0 auto;width:81px;height:23px;border-radius:3px;background:#28a745;color:#fff;font:700 10.5px/22px ${SS};text-align:center}
.c{margin:31px 12px 0;height:500px;border:1px solid #dee2e6;border-radius:4px}`,()=>
`<header><svg width="9" height="9" viewBox="0 0 9 9"><path d="M1.3 1.3l6.4 6.4M7.7 1.3L1.3 7.7" stroke="#fff" stroke-width="2.5"/></svg></header><div class="b">${T('Interface UP',58)}</div><div class="c"></div>`);

/* ---------- browser popup ---------- */
define('stat-card',`:host{display:flex;flex-direction:column;align-items:center;height:89px;background:#fff;border-left:4px solid #2196F3;border-radius:10px;box-shadow:0 2px 10px rgba(0,0,0,.1);padding-top:17px;font-family:${SEG}}
b{font-size:24px;line-height:34px;color:var(--c)}span{font-size:13.5px;line-height:20px;color:#6c757d;margin-top:4px}`,h=>
`<b>${h.getAttribute('v')}</b><span>${T(h.getAttribute('l'),h.getAttribute('w'))}</span>`);
define('iface-table',`:host{display:block;margin:20px 20px 0;box-shadow:0 2px 10px rgba(0,0,0,.1);border-radius:10px 10px 0 0;overflow:hidden;font-family:${SEG}}
.r{display:grid;grid-template-columns:89px 348px 179px 110px 179px;height:49.4px;border-bottom:1px solid #e3e6e9;background:#fff}
.r>*{padding:1px 0 0 12px;display:flex;align-items:center;gap:4px;font-size:16px;line-height:24px;color:#212529;font-weight:600}
.h{height:40px;border:0}.h>*{background:linear-gradient(135deg,#17a2b8,#138496);color:#fff;font-size:12px;font-weight:700;padding-top:0}
.bd{margin-top:4px;height:18px;border-radius:4px;color:#fff;font-size:10.6px;font-weight:700;line-height:18px;background:#6c757d;text-align:center}
.ip{height:19px;border-radius:10px;background:#17a2b8;color:#fff;font-size:10.8px;font-weight:600;line-height:18.5px;text-align:center;margin:2px 0 0 1px}
.no{font-weight:400;color:#6c757d}`,()=>{
const R=[[1,'ether1',47,'e',0],[2,'ether2',48,'e',0],[3,'ether3',48,'e',1],[4,'ether4',48,'e',0,'10.5.50.1/24',65,53],[5,'pwr-line1',70,'o',0],[6,'wlan1',43,'i',1],[8,'bridge1',57,'t',1,'192.168.100.21/24',92,80],[9,'vpn-remote-saputrabudi',186,'o',1,'10.1.1.252/24',71,59]];
const Y={e:['ethernet-csmacd',94,78],o:['other',43,27],i:['ieee80211',67,49],t:['type-209',61,44]};
const bd=(t,w,tw,c='',k='#fff',cl='bd')=>`<span class="${cl}" style="width:${w}px;${c?`background:${c};`:''}color:${k}">${T(t,tw)}</span>`;
return `<div class="r h"><div>${T('INDEX',34)}</div><div>${T('INTERFACE',59)}</div><div>${T('TYPE',27)}</div><div>${T('STATUS',41)}</div><div>${T('IP ADDRESSES',78)}</div></div>`+
R.map(a=>`<div class="r"><div>${a[0]}</div><div>${IC('eth',16,'#007bff')}${T(a[1],a[2])}</div><div>${bd(...Y[a[3]])}</div><div>${a[4]?bd('UP',29,14,'#28a745','#212529'):bd('DOWN',49,33,'#dc3545','#212529')}</div><div>${a[5]?bd(a[5],a[6],a[7],'','#fff','ip'):`<span class="no">${T('No IP',39)}</span>`}</div></div>`).join('');});
define('chrome-window',`:host{position:absolute;left:60px;top:28px;width:1000px;height:764px;border-radius:7px;overflow:hidden;font-family:${SEG};display:flex;flex-direction:column;background:#fff}
.t{height:30px;background:#dbe6d3;display:flex;align-items:center;padding:0 18px 0 5px;font-size:12px;color:#7d857a;flex:none}.t svg{margin-left:36px}
.a{height:35px;background:#e4ecdd;border-bottom:1px solid #a9b79c;display:flex;align-items:center;padding:3px 0 2px 5px;gap:8px;font-size:14px;color:#555c50;flex:none;box-shadow:0 2px #eef3ea}
.c{width:24px;height:24px;border-radius:50%;background:#fbfdf9;display:flex;align-items:center;justify-content:center}
.v{flex:1;display:flex;min-height:0}.bg{flex:1;background:linear-gradient(135deg,#667eea,#764ba2);padding:20px 20px 0;margin:0}
.w{height:100%;border-radius:15px 15px 0 0;background:#fff;overflow:hidden}.sh{height:100%;border-radius:15px 15px 0 0;box-shadow:0 10px 30px rgba(0,0,0,.3)}
.hd{height:103px;background:linear-gradient(135deg,#2196F3,#1976D2);position:relative;color:#fff;text-align:center;padding-top:18px}
.h1{display:flex;justify-content:center;align-items:center;gap:9px;font-size:28px;font-weight:600;line-height:40px;margin-left:0}
.h2{font-size:16px;line-height:24px;margin-top:1px;display:flex;justify-content:center;gap:5px;color:#e6f2fd}
.rf{position:absolute;right:20px;top:20px;width:86px;height:36px;border-radius:18px;border:1px solid rgba(255,255,255,.35);background:rgba(255,255,255,.2);display:flex;align-items:center;justify-content:center;gap:3px;font-size:12.6px}
.st{height:120px;background:#f8f9fa;border-bottom:1px solid #dee2e6;padding:15px;display:grid;grid-template-columns:repeat(4,1fr);gap:29.8px}
.sb{width:15px;background:#fdfdfd;display:flex;flex-direction:column;align-items:center;padding-top:5px;flex:none}.th{width:9px;height:440px;border-radius:5px;background:#8b8b8b;margin-top:6px}
.u{border:4.5px solid transparent;border-bottom:7px solid #808080;border-top:0}.d{border:4.5px solid transparent;border-top:7px solid #808080;border-bottom:0;margin-top:auto;margin-bottom:4px}`,()=>
`<div class="t">${IC('globe',14,'#5a5f5a')}<span style="width:6px"></span>${T('Interface Details - Gateway - Google Chrome',237)}<span style="flex:1"></span><svg width="10" height="10"><path d="M0 5h10" stroke="#70786d"/></svg><svg width="10" height="10"><rect x=".5" y=".5" width="9" height="9" rx="1" fill="none" stroke="#70786d"/></svg><svg width="10" height="10"><path d="M0 0l10 10M10 0L0 10" stroke="#70786d"/></svg></div>
<div class="a"><span class="c"><svg width="14" height="14"><circle cx="7" cy="7" r="6.1" fill="none" stroke="#222" stroke-width="1.4"/><path d="M7 6v4.4M7 3.4v1.4" stroke="#222" stroke-width="1.4"/></svg></span><span>${T('about:',39)}<span style="color:#1b1e19">${T('blank',34)}</span></span></div>
<div class="v"><div class="bg"><div class="sh"><div class="w"><div class="hd"><div class="h1">${IC('net',28)}${T('Interface Details',205)}</div><div class="h2"><b>${T('Gateway',65)}</b>${T('(192.168.100.21)',115)}</div><div class="rf">${IC('sync',13)}${T('Refresh',40)}</div></div>
<div class="st"><stat-card v="9" l="TOTAL INTERFACES" w="109" style="--c:#007bff"></stat-card><stat-card v="5" l="UP" w="16" style="--c:#28a745"></stat-card><stat-card v="4" l="DOWN" w="39" style="--c:#dc3545"></stat-card><stat-card v="4" l="WITH IP" w="46" style="--c:#17a2b8"></stat-card></div><iface-table></iface-table></div></div></div>
<div class="sb"><span class="u"></span><span class="th"></span><span class="d"></span></div></div>`);

/* ---------- router tool ---------- */
define('mdi-title',`:host{display:flex;height:23px;border-top:1px solid #000;box-shadow:inset 0 1px #d8d8e8;background:var(--c);align-items:center;padding:2px 3px 0 5px;gap:2px;color:#fff;font-size:12px;flex:none}
fit-text{padding-top:1px}
.x{width:15px;height:15px;background:#f0f0f0;border:1px solid #333;display:flex;align-items:center;justify-content:center}`,h=>
`${T(h.getAttribute('t'),h.getAttribute('w'))}<span style="flex:1"></span><span class="x"><svg width="9" height="9"><rect x=".5" y=".5" width="8" height="8" fill="none" stroke="#222"/><path d="M0 1.5h9" stroke="#222"/></svg></span><span class="x"><svg width="8" height="8"><path d="M1 1l6 6M7 1L1 7" stroke="#222" stroke-width="2"/></svg></span>`);
define('tab-strip',`:host{display:flex;height:27px;align-items:flex-end;padding-left:5px;background:#f0f0f0;flex:none;font-size:12px}
span{height:22px;background:#d9d9d9;border-right:1px solid #9a9a9a;border-left:1px solid #fff;display:flex;align-items:center;padding:2px 0 0 5px;flex:none}
span.on{height:25px;background:#f4f4f4;border-top:1px solid #fff;padding:0 0 1px 6px}`,h=>
JSON.parse(h.getAttribute('tabs')).map((a,i)=>`<span class="${i?'':'on'}" style="width:${a[1]}px">${T(a[0],a[2])}</span>`).join(''));
define('tool-button',`:host{display:flex;align-items:center;justify-content:center;gap:4px;height:23px;border:1px solid #999;background:#f0f0f0;box-shadow:inset 1px 1px #fff;flex:none;font-size:12px;line-height:14px}`,()=>'<slot></slot>');
const TB=(w,ml,c)=>`<tool-button style="width:${w}px;margin-left:${ml}px">${c}</tool-button>`;
const HD=(cols)=>`<div class="th" style="grid-template-columns:${cols.map(c=>c[1]+'px').join(' ')}">${cols.map(c=>`<span>${c[0]&&c[2]?T(c[0],c[2]):c[0]}</span>`).join('')}</div>`;
const wcss=`.bar{display:flex;height:31px;padding:4px 0 0 4px;border-top:1px solid #fff;flex:none;align-items:flex-start}
.th{display:grid;height:18px;margin:0 0 0 4px;width:590px;background:#f0f0f0;border-top:1px solid #8d8d8d;border-left:1px solid #999;border-bottom:1px solid #aaa;font-size:12px;line-height:18px;overflow:hidden;flex:none}
.th span{border-right:1px solid #8d8d8d;box-shadow:inset 1px 1px #fff;padding-left:2px;overflow:hidden;white-space:nowrap}
.in{height:17px;border:1px solid #999;background:#fff;font-size:12px;line-height:16px;padding-left:3px;margin-top:3px;flex:none}
.tri{border:4.5px solid transparent;border-top:5px solid #000;border-bottom:0;display:inline-block;margin:6px 0 0 1px;float:left}`;
define('firewall-win',`:host{display:flex;flex-direction:column;height:99px;background:#f0f0f0;overflow:hidden;flex:none;border-right:1px solid #555}${wcss}`,()=>
`<mdi-title style="--c:#c0c0c0" t="Firewall" w="34"></mdi-title>
<tab-strip tabs='[["Filter Rules",67,51],["NAT",36,22],["Mangle",49,35],["Raw",35,21],["Service Ports",77,62],["Connections",73,59],["Address Lists",76,61],["Layer7 Protocols",92,78]]'></tab-strip>
<div class="bar" style="height:29px;padding-top:3px">${TB(22,0,WI('add'))}${TB(22,3,WI('rem'))}${TB(22,8,WI('ok'))}${TB(22,3,WI('no'))}${TB(22,8,WI('note'))}${TB(22,8,WI('filter'))}${TB(103,8,WI('rstd')+`<span style="color:#808080">${T('Reset Counters',73)}</span>`)}${TB(117,3,WI('rst')+T('Reset All Counters',86))}<span class="in" style="width:60px;margin-left:22px;color:#999;font-style:italic">${T('Find',24)}</span><span class="in" style="width:88px;margin-left:7px">${T('all',10)}</span><span class="in" style="width:17px;margin-left:1px;padding:1px 0 0 1px;background:#f0f0f0">${WI('dd',13)}</span></div>
${HD([['<i style="font-style:normal;margin-left:7px">#</i>',24,0],['',27,0],['Action',50,30],['Chain',65,27],['Src. Address',70,60],['Dst. Address',70,60],['Proto...',40,34],['Src. Port',60,40],['Dst. Port',60,40],['In. Inter...',50,45],['Out. Int...',50,45],['In',7,0],['<i class="tri"></i>',16,0]])}`);
define('iface-win',`:host{display:flex;flex-direction:column;flex:1;background:#f0f0f0;min-height:0;border-right:1px solid #555;position:relative}${wcss}
.body{flex:1;width:590px;margin-left:4px;background:#fff;border-left:1px solid #999;border-right:1px solid #ccc}
.r{display:grid;grid-template-columns:40px 159px 120px 70px 50px 120px 29px;height:15px;font-size:12px;line-height:14px}
.r>*{border-right:1px solid #ddd;border-bottom:1px solid #d4d4d4;padding-left:2px;display:flex;align-items:center;gap:4px;overflow:hidden}.r .n{justify-content:flex-end;padding-right:1px;padding-left:0}
.r:first-child>*{border-bottom:1px dotted #666}.cm{height:15px;border-bottom:1px solid #d4d4d4;font-size:12px;line-height:14px;padding-left:16px}`,()=>{
const r=(f,ic,nm,w,ty,tw,a,l,tx,xw,ind=0)=>`<div class="r"><div>${f?T(f,f.length*7):''}</div><div style="padding-left:${2+ind}px">${WI(ic,12)}${T(nm,w)}</div><div>${T(ty,tw)}</div><div class="n">${T(a,23)}</div><div class="n">${l?T(l,23):''}</div><div class="n" style="padding-right:2px">${T(tx,xw)}</div><div></div></div>`;
return `<mdi-title style="--c:#4d4dcc" t="Interface List" w="60"></mdi-title>
<tab-strip tabs='[["Interface",57,41],["Interface List",75,60],["Ethernet",53,39],["EoIP Tunnel",73,59],["IP Tunnel",61,46],["GRE Tunnel",72,59],["VLAN",43,27],["VRRP",43,29],["Bonding",53,38],["LTE",34,20]]'></tab-strip>
<div class="bar" style="height:30px;padding-top:3px">${TB(30,0,WI('add')+'<i style="border:3.5px solid transparent;border-top:4px solid #000;border-bottom:0;margin-left:-2px"></i>')}${TB(22,4,WI('rem'))}${TB(22,8,WI('ok'))}${TB(22,3,WI('no'))}${TB(22,8,WI('note'))}${TB(22,8,WI('filter'))}${TB(87,8,T('Detect Internet',70))}<span class="in" style="width:60px;margin-left:262px;color:#999;font-style:italic">${T('Find',24)}</span></div>
${HD([['',41,0],['Name',159,27],['Type',120,23],['Actual MTU',70,56],['L2 MTU',50,38],['Tx',120,11],['Rx',14,0],['<i class="tri"></i>',15,0]])}
<div class="body">`+
r('R','br','bridge1',34,'Bridge',29,'1500','1598','100.5 kbps',52)+r('R','wl','vlan1',25,'VLAN',27,'1500','1594','0 bps',25,16)+r('S','port','ether1',30,'Ethernet',38,'1500','1598','0 bps',25)+r('S','port','ether2',30,'Ethernet',38,'1500','1598','0 bps',25)+r('RS','port','ether3',30,'Ethernet',38,'1500','1598','192.1 kbps',52)+r('','port','ether4',30,'Ethernet',38,'1500','1598','0 bps',25)+r('','port','pwr-line1',42,'PWR',25,'1500','1598','0 bps',25)+
`<div class="cm">${T('::: saputrabudi@tunnel.id',118)}</div>`+r('R','vpn','vpn-remote-saputrabudi',111,'OVPN Client',59,'1500','','0 bps',25)+r('RS','wl','wlan1',28,'Wireless (Atheros AR9...',115,'1500','1600','1592 bps',43)+'</div>';});
define('side-menu',`:host{display:flex;width:138px;flex:none;background:#f0f0f0;border-right:1px solid #222;padding:1px 0 0 2px}
.s{width:20px;background:linear-gradient(#4141c4,#00007a 75%);flex:none;display:flex;align-items:flex-start;justify-content:center;padding-top:279px;overflow:hidden}
.s b{writing-mode:vertical-rl;transform:rotate(180deg);font:400 17px/20px "DejaVu Sans",sans-serif;letter-spacing:.6px;color:#9292d4;white-space:nowrap}
.m{flex:1;padding:0 2px 0 2px}.i{height:20px;border-bottom:1px solid #d6d6d6;box-shadow:0 1px #fafafa;display:flex;align-items:center;gap:5px;padding-left:3px;font-size:12px;padding-right:6px}`,()=>{
const L=[['Quick Set','wand',46],['CAPsMAN','dome',50],['Interfaces','card',46],['Wireless','dome',39],['Bridge','bridge',29],['PPP','ppp',20],['Switch','sw',31],['Mesh','mesh',25],['IP','ip',9,1],['OpenFlow','disc',48],['MPLS','disc',28,1],['IPv6','v6',22,1],['Routing','route',36,1],['System','gear',33,1],['Queues','queue',37],['Files','files',20],['Log','log',17],['RADIUS','radius',40],['Tools','tools',25,1],['IoT','iot',15,1],['Windows','win',43,1],['More','',23,1]];
return `<div class="s"><b>RouterOS WinBox</b></div><div class="m">`+L.map(a=>`<div class="i">${a[1]?WI(a[1]):'<span></span>'}${T(a[0],a[2])}<span style="flex:1"></span>${a[3]?'<svg width="6" height="10"><path d="M.5 9V.8L5.5 5.6" fill="none" stroke="#888"/></svg>':''}</div>`).join('')+'</div>';});
define('winbox-window',`:host{position:absolute;left:1013px;top:180px;width:737px;height:529px;border-radius:7px;overflow:hidden;display:flex;flex-direction:column;background:#f0f0f0;font-family:"Liberation Sans",Arial,sans-serif;color:#111}
.t{height:30px;background:linear-gradient(90deg,#f8f0e4,#eaf3fa 30%,#eaf3fa 60%,#f9f0e4);display:flex;align-items:center;padding:0 18px 0 8px;font-family:${SEG};font-size:12px;flex:none}.t svg.k{margin-left:35px}
.m{height:20px;background:#fff;display:flex;align-items:center;padding-left:7px;gap:14px;font-family:${SEG};font-size:12px;flex:none;}
.b{height:29px;border-top:1px solid #8a8a8a;box-shadow:inset 0 1px #fff;display:flex;padding:3px 6px 0 2px;flex:none;font-size:12px;align-items:flex-start}
.f{height:18px;width:80px;border:1px solid #999;margin:1px 0 0 2px;padding-left:2px;font-size:12.5px;line-height:17px}
.g{width:10px;height:12px;background:repeating-linear-gradient(#2a5a14 0 2px,#3b7a20 2px 3px);border-bottom:2px solid #3bd23b;margin-top:4px}
.w{flex:1;display:flex;min-height:0;border-top:1px solid #777}.d{flex:1;background:#a0a0a0;display:flex;flex-direction:column;padding-top:34px;min-width:0;border-right:1px solid #ddd}`,()=>
`<div class="t"><svg width="16" height="16"><defs><radialGradient id="o" cx=".35" cy=".3"><stop stop-color="#8fc4ee"/><stop offset="1" stop-color="#1c5ea8"/></radialGradient></defs><circle cx="8" cy="8" r="7.8" fill="url(#o)"/><path d="M4 3q2 6 9 6M3 6q3 6 9 5" stroke="#fff" stroke-width="1.3" fill="none"/></svg><span style="width:6px"></span>${T('admin@192.168.100.21 (MikroTik) - WinBox (64bit) v6.49.19 on hAP lite (smips)',418)}<span style="flex:1"></span><svg class="k" width="10" height="10"><path d="M0 5h10" stroke="#111" stroke-width="1.2"/></svg><svg class="k" width="10" height="10"><rect x=".6" y=".6" width="8.8" height="8.8" rx="1" fill="none" stroke="#111" stroke-width="1.2"/></svg><svg class="k" style="margin-left:36px" width="10" height="10"><path d="M0 0l10 10M10 0L0 10" stroke="#111" stroke-width="1.2"/></svg></div>
<div class="m">${T('Session',39)}${T('Settings',42)}${T('Dashboard',57)}</div>
<div class="b">${TB(22,0,WI('undo'))}${TB(22,3,WI('redo'))}${TB(69,8,T('Safe Mode',52))}<span style="margin:5px 0 0 14px">${T('Session:',40)}</span><span class="f">${T('192.168.100.21',75)}</span><span style="flex:1"></span><span class="g"></span></div>
<div class="w"><side-menu></side-menu><div class="d"><firewall-win></firewall-win><iface-win></iface-win></div></div>`);

/* ---------- monitoring widget ---------- */
define('auto-monitor',`:host{position:absolute;left:1717px;top:754px;width:187px;height:145px;border-radius:6px;background:#fff;border:1px solid #ccc;box-shadow:0 2px 8px rgba(0,0,0,.35);font-family:${SS};padding:11px 11px 0;color:#343a40}
.h{display:flex;align-items:center;gap:2px;font-size:14px;line-height:21px;height:21px;color:#454b51}
.m{width:23px;height:21px;border:1px solid #6c757d;border-radius:3px;margin-left:auto;display:flex;align-items:center;justify-content:center}
.s{font-size:11px;line-height:14px;margin-top:9px;color:#6c757d}.a{width:92px;height:15px;background:#28a745;border-radius:3px;color:#fff;font:700 9.5px/14px ${SS};text-align:center;margin-top:4px}
.n{font:11px/14px "Liberation Mono",monospace;margin-top:11px;color:#5a6168}
.b{display:flex;height:23px;margin-top:9px;color:#fff;font-size:10.6px;line-height:16px;font-weight:500;border-radius:3px;overflow:hidden}.b div{display:flex;align-items:center;justify-content:center;gap:2px}`,()=>
`<div class="h">${IC('wifi',12)}${T('Auto Monitoring',81)}<span class="m">${IC('minus',10)}</span></div><div class="s">${T('Status:',27)}</div><div class="a">${T('Active (5 min interval)',80)}</div><div class="n">${T('Next check in: 3:55',110)}</div><div class="b"><div style="width:92px;background:#007bff">${IC('sync',9)}${T('Check Now',42)}</div><div style="flex:1;background:#6c757d;gap:0">${IC('pause',8)}${T('Pause',23)}</div></div>`);

define('desk-top',`:host{display:block;position:relative;width:1914px;height:915px;overflow:hidden}
.l{position:absolute;left:60px;top:28px;width:1000px;height:764px;border-radius:7px;box-shadow:0 0 1px #333,0 12px 36px rgba(0,0,0,.45)}
.k{position:absolute;left:1013px;top:180px;width:737px;height:529px;border-radius:7px;box-shadow:0 0 1px #333,0 14px 34px rgba(0,0,0,.5),0 2px 14px rgba(0,0,0,.25)}`,()=>
`<dash-page></dash-page><info-modal></info-modal><div class="l"></div><chrome-window></chrome-window><auto-monitor></auto-monitor><div class="k"></div><winbox-window></winbox-window>`);
</script>
</body>
</html>
